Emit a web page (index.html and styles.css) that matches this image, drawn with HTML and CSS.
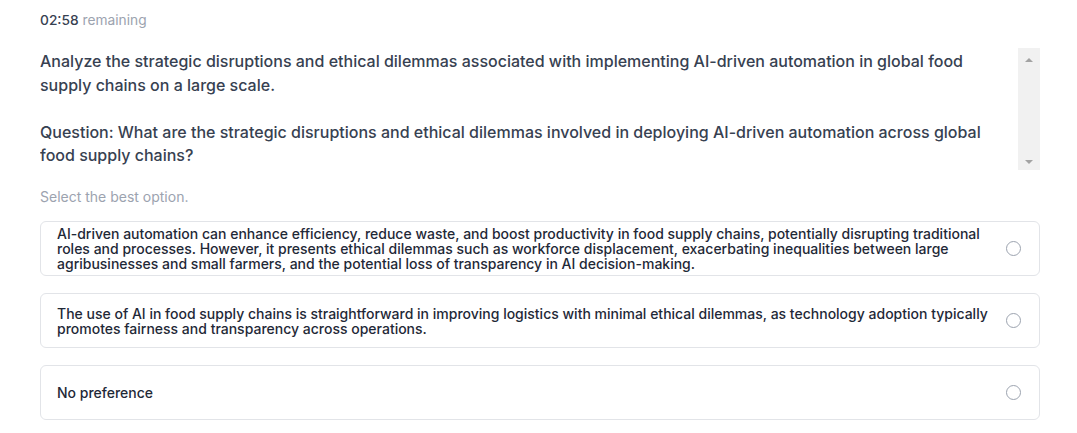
FILE: index.html
```html
<!DOCTYPE html>
<html>
<head>
<meta charset="utf-8">
<link rel="stylesheet" href="styles.css">
</head>
<body>
<div class="page">
  <div class="timer"><span class="time">02:58</span> <span class="rem">remaining</span></div>
  <div class="qbox">
    <div class="qtext">
      <p>Analyze the strategic disruptions and ethical dilemmas associated with implementing AI-driven automation in global food supply chains on a large scale.</p>
      <p>Question: What are the strategic disruptions and ethical dilemmas involved in deploying AI-driven automation across global food supply chains?</p>
    </div>
    <div class="scrollbar">
      <span class="arrow up"></span>
      <span class="arrow down"></span>
    </div>
  </div>
  <div class="hint">Select the best option.</div>
  <div class="options">
    <label class="opt">
      <span class="otext">AI-driven automation can enhance efficiency, reduce waste, and boost productivity in food supply chains, potentially disrupting traditional roles and processes. However, it presents ethical dilemmas such as workforce displacement, exacerbating inequalities between large agribusinesses and small farmers, and the potential loss of transparency in AI decision-making.</span>
      <span class="radio"></span>
    </label>
    <label class="opt">
      <span class="otext">The use of AI in food supply chains is straightforward in improving logistics with minimal ethical dilemmas, as technology adoption typically promotes fairness and transparency across operations.</span>
      <span class="radio"></span>
    </label>
    <label class="opt">
      <span class="otext">No preference</span>
      <span class="radio"></span>
    </label>
  </div>
</div>
</body>
</html>
```
FILE: styles.css
```css
* { box-sizing: border-box; }
html, body { margin: 0; padding: 0; background: #fff; }
body { font-family: Inter, "Noto Sans", sans-serif; color: #374151; }
.page { width: 1000px; margin-left: 40px; padding-top: 12px; }
.timer { font-size: 13.75px; line-height: 17px; }
.time { color: #374151; font-weight: 500; }
.rem { color: #9ca3af; }
.qbox { display: flex; margin-top: 19px; height: 122px; }
.qtext { flex: 1; padding-top: 2px; padding-right: 12px; font-size: 16px; line-height: 23.5px; color: #374151; font-weight: 500; overflow: hidden; }
.qtext p { margin: 0 0 23.5px 0; }
.scrollbar { width: 22px; background: #f1f1f1; display: flex; flex-direction: column; justify-content: space-between; align-items: center; padding: 10px 0 6px; }
.arrow { width: 0; height: 0; border-left: 4px solid transparent; border-right: 4px solid transparent; }
.arrow.up { border-bottom: 4px solid #a3a3a3; }
.arrow.down { border-top: 4px solid #a3a3a3; }
.hint { font-size: 14px; color: #9ca3af; margin-top: 18px; line-height: 17px; }
.options { display: flex; flex-direction: column; gap: 17px; margin-top: 16px; }
.opt { display: flex; align-items: center; min-height: 55px; border: 1px solid #e2e4e8; border-radius: 6px; padding: 2px 18px 2px 16px; }
.otext { flex: 1; font-size: 14px; line-height: 15px; font-weight: 500; color: #1f2937; padding-right: 6px; }
.radio { width: 15px; height: 15px; border: 1px solid #9ca3af; border-radius: 50%; flex: none; }
```
